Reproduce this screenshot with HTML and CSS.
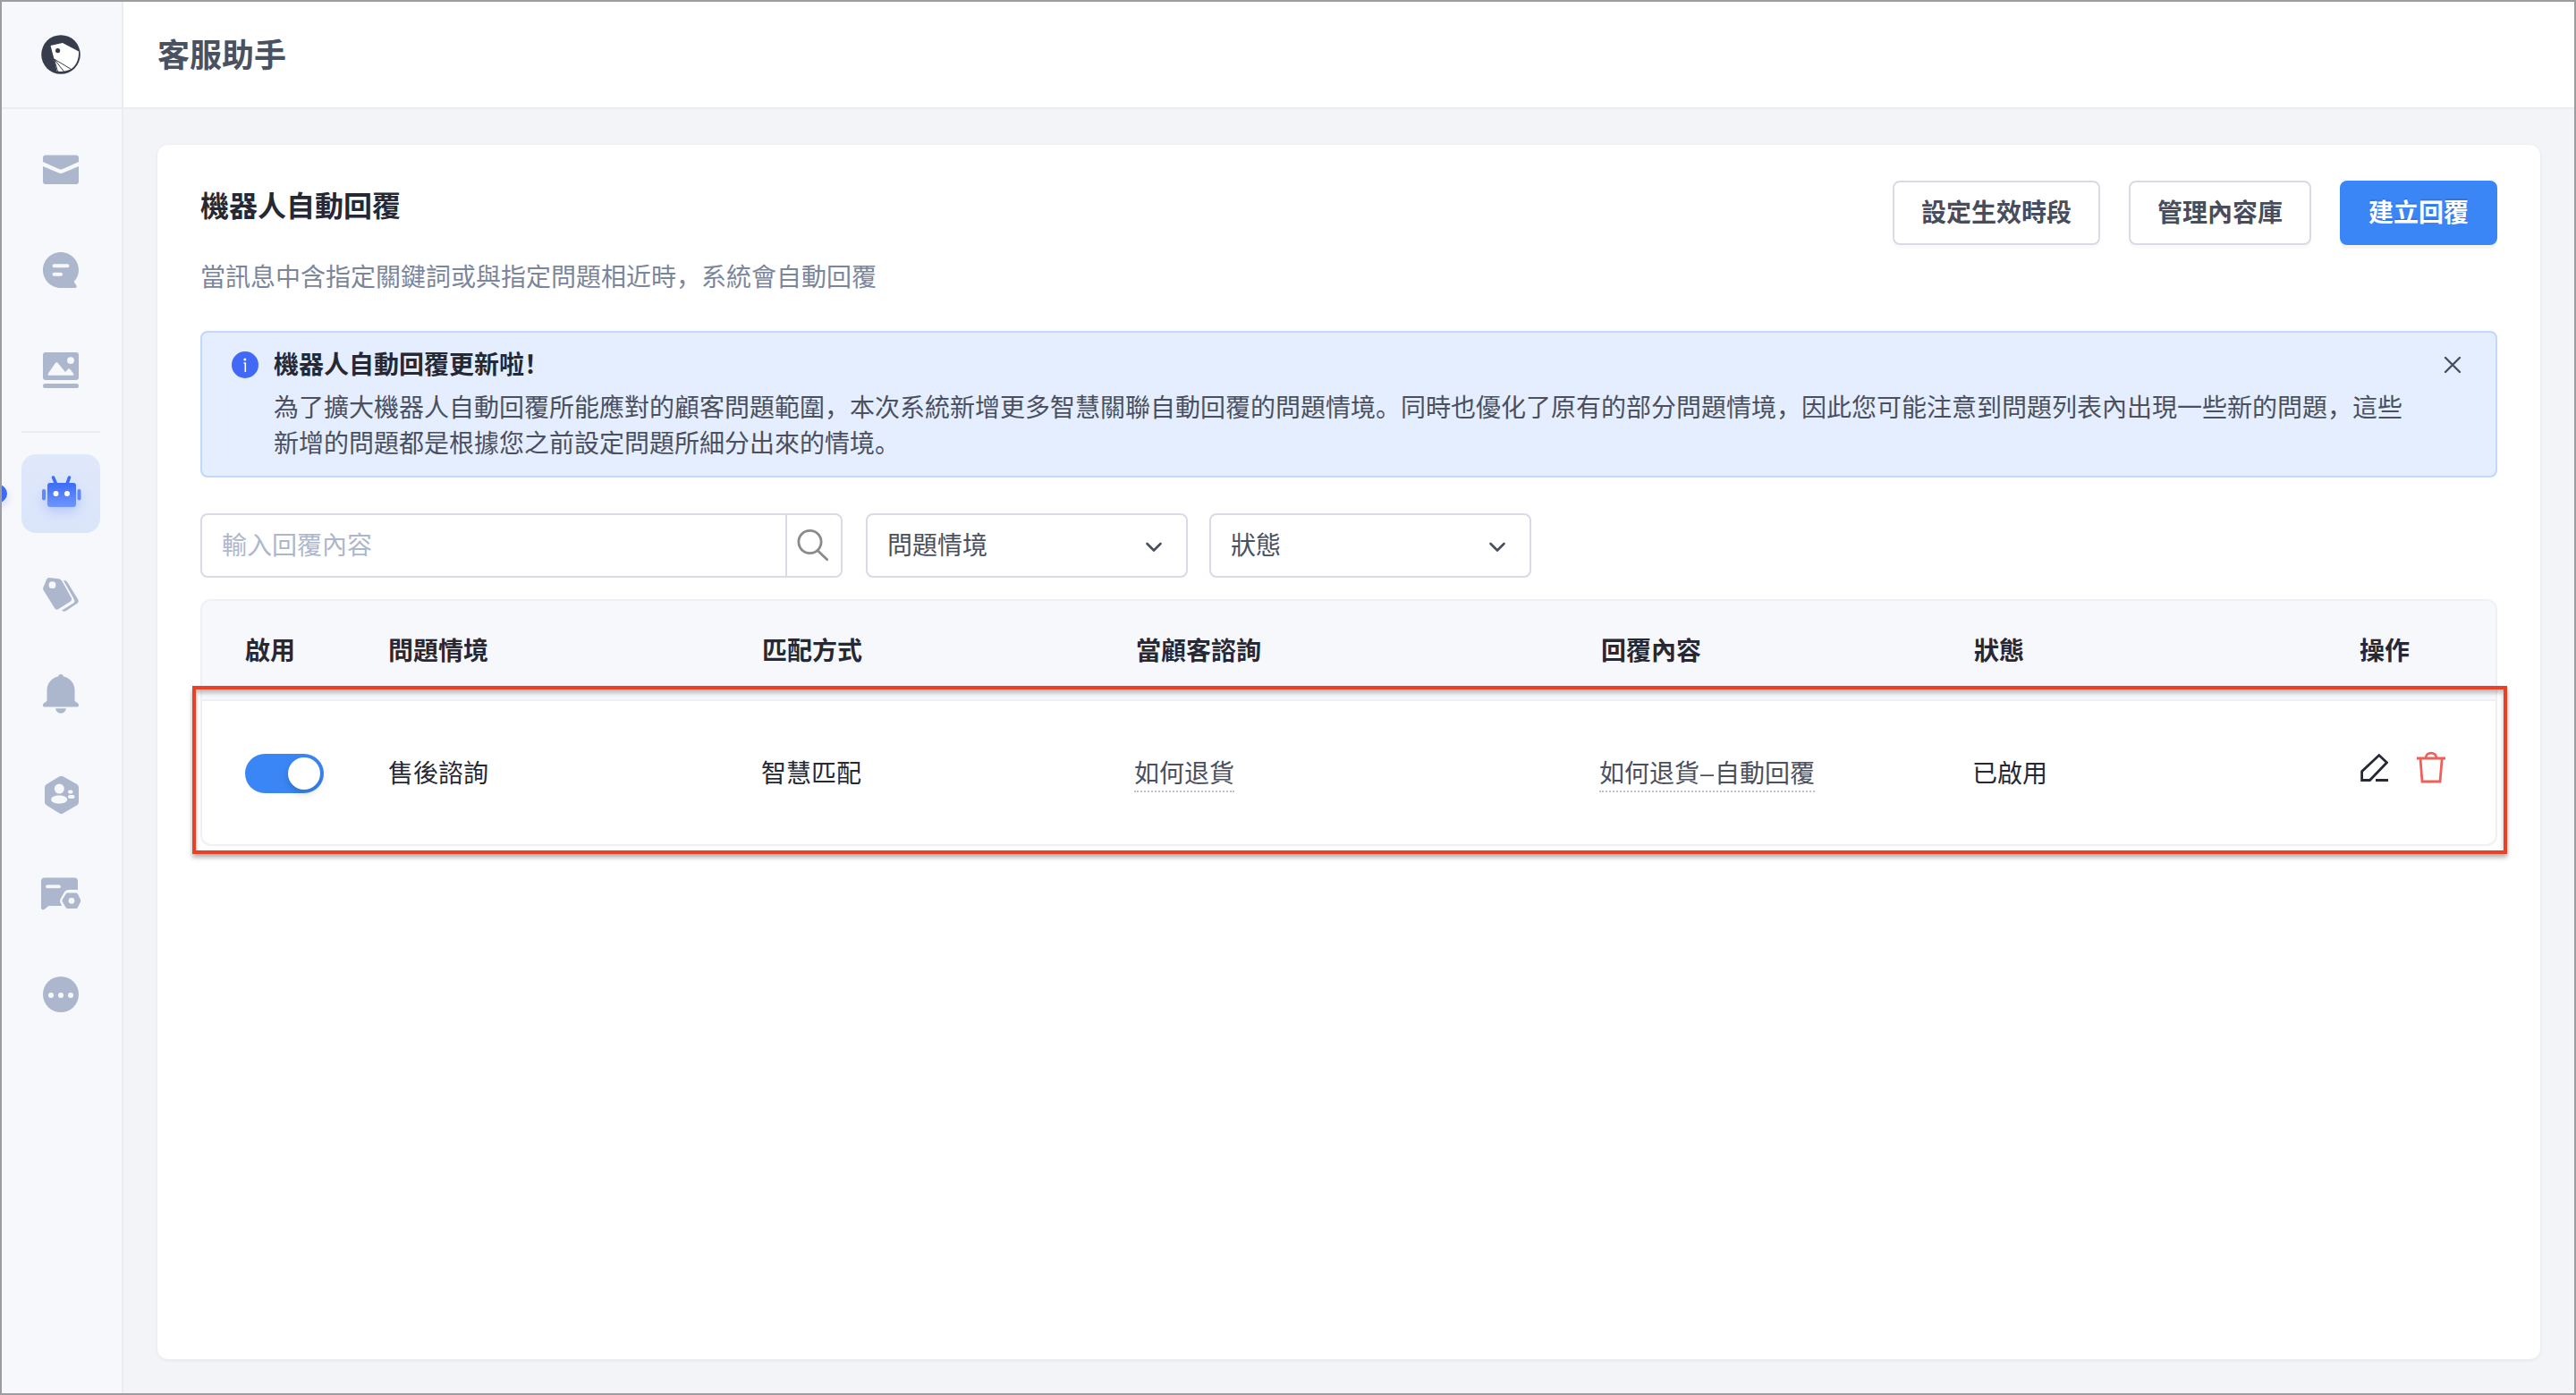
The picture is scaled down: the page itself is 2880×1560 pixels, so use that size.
FILE: index.html
```html
<!DOCTYPE html>
<html lang="zh-CN">
<head>
<meta charset="utf-8">
<title>客服助手</title>
<link rel="stylesheet" href="styles.css">
</head>
<body>
<div class="app">
  <aside class="sidebar">
    <div class="brand">
      <svg width="44" height="44" viewBox="0 0 44 44"><circle cx="22" cy="22" r="21.8" fill="#373d4d"/><path d="M10.5 12 24 9 42 18.500C42.500 27 39 34 34.500 37.500 30 40.500 23 41.500 17.500 40.500L14.500 27Z" fill="#fff"/><circle cx="18.600" cy="17.600" r="2.600" fill="#373d4d"/><path d="M14.500 27 34.500 39M14.500 27 25.500 41M14.500 27 18.500 41" stroke="#373d4d" stroke-width="1" fill="none"/></svg>
    </div>
    <nav class="nav">
      <a class="nav-item"><svg width="48" height="48" viewBox="0 0 48 48"><path d="M4 10.500a3 3 0 0 1 3-3H41a3 3 0 0 1 3 3V15L26 23q-2 .9-4 0L4 15ZM4 20 22 27.500q2 .8 4 0L44 20V37a3 3 0 0 1-3 3H7a3 3 0 0 1-3-3Z"/></svg></a>
      <a class="nav-item"><svg width="48" height="48" viewBox="0 0 48 48"><path fill-rule="evenodd" d="M24 4C35 4 44 13 44 24c0 5-2 9.500-5.400 13l2.800 4.300c.9 1.400.2 2.700-1.400 2.700H24C13 44 4 35 4 24S13 4 24 4ZM16.500 17.200a2 2 0 0 0 0 4h15a2 2 0 0 0 0-4ZM16.500 26.700a2 2 0 0 0 0 4h7.500a2 2 0 0 0 0-4Z"/></svg></a>
      <a class="nav-item"><svg width="48" height="48" viewBox="0 0 48 48"><path fill-rule="evenodd" d="M7 4H41a3 3 0 0 1 3 3V32a3 3 0 0 1-3 3H7a3 3 0 0 1-3-3V7a3 3 0 0 1 3-3ZM11 29.800H37c1.600 0 1.900-1.300 1-2.400l-3.600-4.400c-.8-1-1.800-1-2.600-.1L29 26 20.800 16c-.9-1.100-2-1.100-2.900 0L10 27.400c-.9 1.200-.5 2.400 1 2.400ZM35 9.200a3.900 3.900 0 1 0 0 7.800 3.900 3.900 0 0 0 0-7.800Z"/><rect x="4" y="39" width="40" height="5" rx="2.500"/></svg></a>
      <hr class="nav-divider">
      <a class="nav-item active"><svg width="48" height="48" viewBox="0 0 48 48"><defs><linearGradient id="bot" x1="0" y1="0" x2="0" y2="1"><stop offset="0" stop-color="#3d6cf6"/><stop offset="1" stop-color="#6f96fd"/></linearGradient></defs><g fill="#3f6ef6"><path d="M15.600 6 18.500 13" stroke="#3f6ef6" stroke-width="3.600" stroke-linecap="round"/><path d="M33.400 6 31 13" stroke="#3f6ef6" stroke-width="3.600" stroke-linecap="round"/></g><rect x="3" y="19" width="4" height="12.500" rx="2" fill="#6088fb"/><rect x="42.500" y="19" width="4" height="12.500" rx="2" fill="#6088fb"/><rect x="9" y="12" width="32" height="27" rx="3" fill="url(#bot)"/><circle cx="18.500" cy="24" r="3" fill="#fff"/><circle cx="31" cy="24" r="3" fill="#fff"/></svg></a>
      <a class="nav-item"><svg width="48" height="48" viewBox="0 0 48 48"><path fill-rule="evenodd" d="M8.300 7.500Q9 6 10.700 6L21.500 7.300Q24 7.600 25.300 9.700L35.700 28.500Q37 31 34.500 32.800L21 41.200Q18.500 42.500 17 40L4.500 19.700Q3.700 18.200 4.500 16.400ZM14.500 10.300a3.900 3.900 0 1 0 0 7.800 3.900 3.900 0 0 0 0-7.800Z"/><path d="M27 9.200q2.500-.6 4.300 1.800L43.300 30.500q1.300 2.500-1 4.300L30 43q-2.400 1.500-5-.3l13-8.200q2.200-1.500 1-4Z"/></svg></a>
      <a class="nav-item"><svg width="48" height="48" viewBox="0 0 48 48"><path d="M24 2c1.700 0 2.800 1 3 2.500C34.500 6.200 39.500 12 39.500 20v10.500c0 1.500.6 2.300 1.800 2.800C45 35 44.600 38.500 42.500 38.500H5.500C3.400 38.500 3 35 6.700 33.300c1.200-.5 1.800-1.300 1.800-2.800V20C8.500 12 13.500 6.200 21 4.500 21.200 3 22.300 2 24 2ZM18 40.300H30C29.500 43.800 27 45.700 24 45.700S18.500 43.800 18 40.300Z"/></svg></a>
      <a class="nav-item"><svg width="48" height="48" viewBox="0 0 48 48"><path fill-rule="evenodd" d="M22.500 4.300q2-1.200 4 0L42 13q2 1.100 2 3.500V33q0 2.400-2 3.500L26.500 45.600q-2 1.200-4 0L8 36.500q-2-1.100-2-3.500V16.500Q6 14.100 8 13ZM22.300 12.500a5.500 5.500 0 1 0 0 11 5.500 5.500 0 0 0 0-11ZM22.200 25.500c-5 0-9 1.700-9 4.600s4 4.700 9 4.700 9-1.800 9-4.700-4-4.600-9-4.600Z"/><rect x="32" y="19.500" width="5.500" height="4" rx="2" fill="#f7f8fc"/><rect x="32" y="25" width="7.500" height="4" rx="2" fill="#f7f8fc"/></svg></a>
      <a class="nav-item"><svg width="48" height="48" viewBox="0 0 48 48"><path fill-rule="evenodd" d="M6 5.500H39a4 4 0 0 1 4 4V19H32.500Q29.500 19 28 21.500L23.800 29q-1.500 2.500 0 5L25 37H10.500L5.500 41Q2 42.500 2 39V9.500a4 4 0 0 1 4-4ZM9 13.500a1.900 1.900 0 0 0 0 3.800H22a1.900 1.900 0 0 0 0-3.800Z"/><path fill-rule="evenodd" d="M31.500 22.500H41q1.200 0 1.800 1L46 30q.5 1.200 0 2.400L42.800 39q-.6 1-1.800 1H31.500q-1.200 0-1.800-1L25.800 32.400q-.5-1.200 0-2.400L29.700 23.500q.6-1 1.800-1ZM36 27.900a3.400 3.400 0 1 0 0 6.800 3.400 3.400 0 0 0 0-6.800Z"/></svg></a>
      <a class="nav-item"><svg width="48" height="48" viewBox="0 0 48 48"><circle cx="24" cy="24" r="20"/><g fill="#f7f8fc"><circle cx="13" cy="25" r="3"/><circle cx="24" cy="25" r="3"/><circle cx="35" cy="25" r="3"/></g></svg></a>
    </nav>
  </aside>
  <div class="main">
    <header class="topbar"><h1>客服助手</h1></header>
    <main class="content">
      <section class="card">
        <div class="card-head">
          <div>
            <h2>機器人自動回覆</h2>
            <p class="desc">當訊息中含指定關鍵詞或與指定問題相近時，系統會自動回覆</p>
          </div>
          <div class="actions">
            <button class="btn">設定生效時段</button>
            <button class="btn">管理內容庫</button>
            <button class="btn primary">建立回覆</button>
          </div>
        </div>
        <div class="alert">
          <svg class="alert-icon" width="30" height="30" viewBox="0 0 30 30"><circle cx="15" cy="15" r="15" fill="#4169f8"/><circle cx="14.800" cy="9" r="1.500" fill="#fff"/><path d="M13.500 13h1.800v10" stroke="#fff" stroke-width="1.600" fill="none"/></svg>
          <div class="alert-body">
            <strong>機器人自動回覆更新啦！</strong>
            <p>為了擴大機器人自動回覆所能應對的顧客問題範圍，本次系統新增更多智慧關聯自動回覆的問題情境。同時也優化了原有的部分問題情境，因此您可能注意到問題列表內出現一些新的問題，這些新增的問題都是根據您之前設定問題所細分出來的情境。</p>
          </div>
          <svg class="alert-close" width="20" height="20" viewBox="0 0 20 20"><path d="M2 2 18 18M18 2 2 18" stroke="#474f5e" stroke-width="2.400" stroke-linecap="round"/></svg>
        </div>
        <div class="filters">
          <div class="search">
            <span class="search-input">輸入回覆內容</span>
            <span class="search-btn"><svg width="38" height="38" viewBox="0 0 38 38" fill="none" stroke="#8b8b8b" stroke-width="2.800" stroke-linecap="round"><circle cx="14.500" cy="14" r="12.600"/><path d="M23.500 24 33.700 33.800"/></svg></span>
          </div>
          <div class="select"><span>問題情境</span><svg width="20" height="14" viewBox="0 0 20 14"><path d="M2.500 3 10 10.500 17.500 3" fill="none" stroke="#474f5e" stroke-width="2.600" stroke-linecap="round" stroke-linejoin="round"/></svg></div>
          <div class="select"><span>狀態</span><svg width="20" height="14" viewBox="0 0 20 14"><path d="M2.500 3 10 10.500 17.500 3" fill="none" stroke="#474f5e" stroke-width="2.600" stroke-linecap="round" stroke-linejoin="round"/></svg></div>
        </div>
        <div class="table-wrap">
          <div class="table">
            <div class="row head"><span>啟用</span><span>問題情境</span><span>匹配方式</span><span>當顧客諮詢</span><span>回覆內容</span><span>狀態</span><span>操作</span></div>
            <div class="row">
              <span class="toggle"></span>
              <span>售後諮詢</span>
              <span>智慧匹配</span>
              <span><a class="link">如何退貨</a></span>
              <span><a class="link">如何退貨<span class="dash">–</span>自動回覆</a></span>
              <span>已啟用</span>
              <span class="ops">
                <svg width="32" height="36" viewBox="0 0 32 36" fill="none" stroke="#262834" stroke-width="2.800"><path d="M2.600 32.500V22.700L21.800 4.600 30.500 12.800 11.500 32.500Z"/><path d="M18 32.500H32"/></svg>
                <svg width="32" height="36" viewBox="0 0 32 36" fill="none" stroke="#f0605b" stroke-width="2.800"><path d="M0 8H32M4 8 6 34H26L28.200 8M10 7.500C10.500 .3 21.500 .3 22 7.500"/></svg>
              </span>
            </div>
          </div>
          <div class="highlight"></div>
        </div>
      </section>
    </main>
  </div>
</div>
</body>
</html>
```

FILE: styles.css
```css
* { box-sizing: border-box; margin: 0; }
body { font-family: "Noto Sans CJK SC", "Noto Sans CJK TC", sans-serif; font-size: 28px; line-height: 40px; color: #262834; }
.app { display: flex; width: 2880px; height: 1560px; border: 2px solid #9d9d9f; background: #f3f4f8; overflow: hidden; }
.sidebar { width: 136px; flex: none; background: #f7f8fc; border-right: 2px solid #eaecf0; }
.brand { height: 120px; display: flex; align-items: center; justify-content: center; padding: 0 2px 1px 0; border-bottom: 2px solid #eaecf0; }
.nav { display: flex; flex-direction: column; align-items: center; padding: 24px 2px 0 0; fill: #acb7cd; }
.nav-item { width: 88px; height: 88px; margin-bottom: 24px; display: flex; align-items: center; justify-content: center; border-radius: 16px; }
.nav-item svg { display: block; }
.nav-divider { width: 88px; height: 2px; border: 0; background: #eaecf0; margin-bottom: 24px; }
.active { position: relative; background: linear-gradient(#e0e8fb, #dae5fa); }
.active svg { filter: drop-shadow(0 6px 6px rgba(80, 120, 250, .25)); }
.active::before { content: ""; position: absolute; left: -36px; top: 34px; width: 20px; height: 20px; border-radius: 50%; background: #3e6bf0; box-shadow: 0 4px 8px rgba(80, 120, 250, .25); }
.main { flex: 1; display: flex; flex-direction: column; }
.topbar { flex: none; height: 120px; display: flex; align-items: center; padding: 0 0 4px 38px; background: #fff; border-bottom: 2px solid #eaecf0; }
h1 { font-size: 36px; font-weight: 700; color: #4a5160; }
.content { flex: 1; padding: 40px 38px 36px; }
.card { height: 1358px; padding: 40px 48px; background: #fff; border-radius: 12px; box-shadow: 0 1px 4px rgba(40, 50, 80, .08); }
.card-head { display: flex; justify-content: space-between; height: 168px; }
h2 { font-size: 32px; line-height: 48px; font-weight: 700; padding-top: 2px; }
.desc { color: #7b859b; margin-top: 36px; }
.actions { display: flex; gap: 32px; align-items: flex-start; }
.btn { height: 72px; padding: 0 30px 4px; border: 2px solid #d8dae8; border-radius: 8px; background: #fff; font: 700 28px/40px "Noto Sans CJK SC", sans-serif; color: #474d5c; box-shadow: 0 4px 0 rgba(0, 0, 0, .02); }
.primary { background: #3b86f7; border-color: #3b86f7; color: #fff; box-shadow: 0 4px 0 rgba(0, 0, 0, .045); text-shadow: 0 -2px 0 rgba(0, 0, 0, .12); }
.alert { display: flex; height: 164px; padding: 14px 38px 0 33px; border: 2px solid #bfd8fc; border-radius: 8px; background: #e5eefe; }
.alert-icon { margin-top: 7px; flex: none; }
.alert-body { width: 2404px; margin-left: 17px; color: #4a5060; }
.alert-body strong { display: block; font-weight: 700; color: #262834; line-height: 40px; }
.alert-body p { width: 2384px; margin-top: 8px; }
.alert-close { margin: 12px 0 0 auto; }
.filters { display: flex; gap: 24px; margin-top: 40px; }
.search { display: flex; width: 718px; height: 72px; margin-right: 2px; border: 2px solid #d8dae8; border-radius: 8px; }
.search-input { flex: 1; padding: 12px 22px; color: #acb7cd; }
.search-btn { width: 62px; border-left: 2px solid #d8dae8; padding: 16px 0 0 11px; }
.search-btn svg, .select svg { display: block; }
.select { display: flex; align-items: center; justify-content: space-between; width: 360px; height: 72px; padding: 0 26px 4px 22px; border: 2px solid #d8dae8; border-radius: 8px; color: #4a5060; }
.select svg { margin-top: 8px; }
.table-wrap { position: relative; margin-top: 24px; }
.table { border: 2px solid #eef0f6; border-radius: 12px; overflow: hidden; }
.row { display: grid; grid-template-columns: 160px 417px 417px 520px 417px 432px 1fr; align-items: center; height: 160px; padding: 0 0 3px 48px; }
.head { height: 112px; padding-bottom: 3px; background: #f7f8fc; border-bottom: 2px solid #eef0f6; font-weight: 700; }
.head span:nth-child(n+3) { padding-left: 1px; }
.head span:nth-child(n+4):nth-child(-n+6) { padding-left: 2px; }
.toggle { position: relative; width: 88px; height: 44px; margin-top: 5px; border-radius: 22px; background: #3b86f7; }
.toggle::after { content: ""; position: absolute; right: 4px; top: 4px; width: 36px; height: 36px; border-radius: 50%; background: #fff; box-shadow: 0 4px 8px rgba(0, 35, 11, .2); }
.link { display: inline-block; height: 43px; margin-top: 3px; color: #4a5060; border-bottom: 2px dotted #b9c0d0; }
.dash { display: inline-block; width: 17px; text-align: center; transform: scaleX(1.2); }
.ops { display: flex; align-items: center; gap: 32px; padding-left: 1px; margin-bottom: 9px; }
.highlight { position: absolute; left: -9px; top: 97px; width: 2588px; height: 188px; border: 4px solid #ec4024; box-shadow: 0 4px 5px rgba(0, 0, 0, .3), inset 0 4px 5px rgba(0, 0, 0, .25); }
```
